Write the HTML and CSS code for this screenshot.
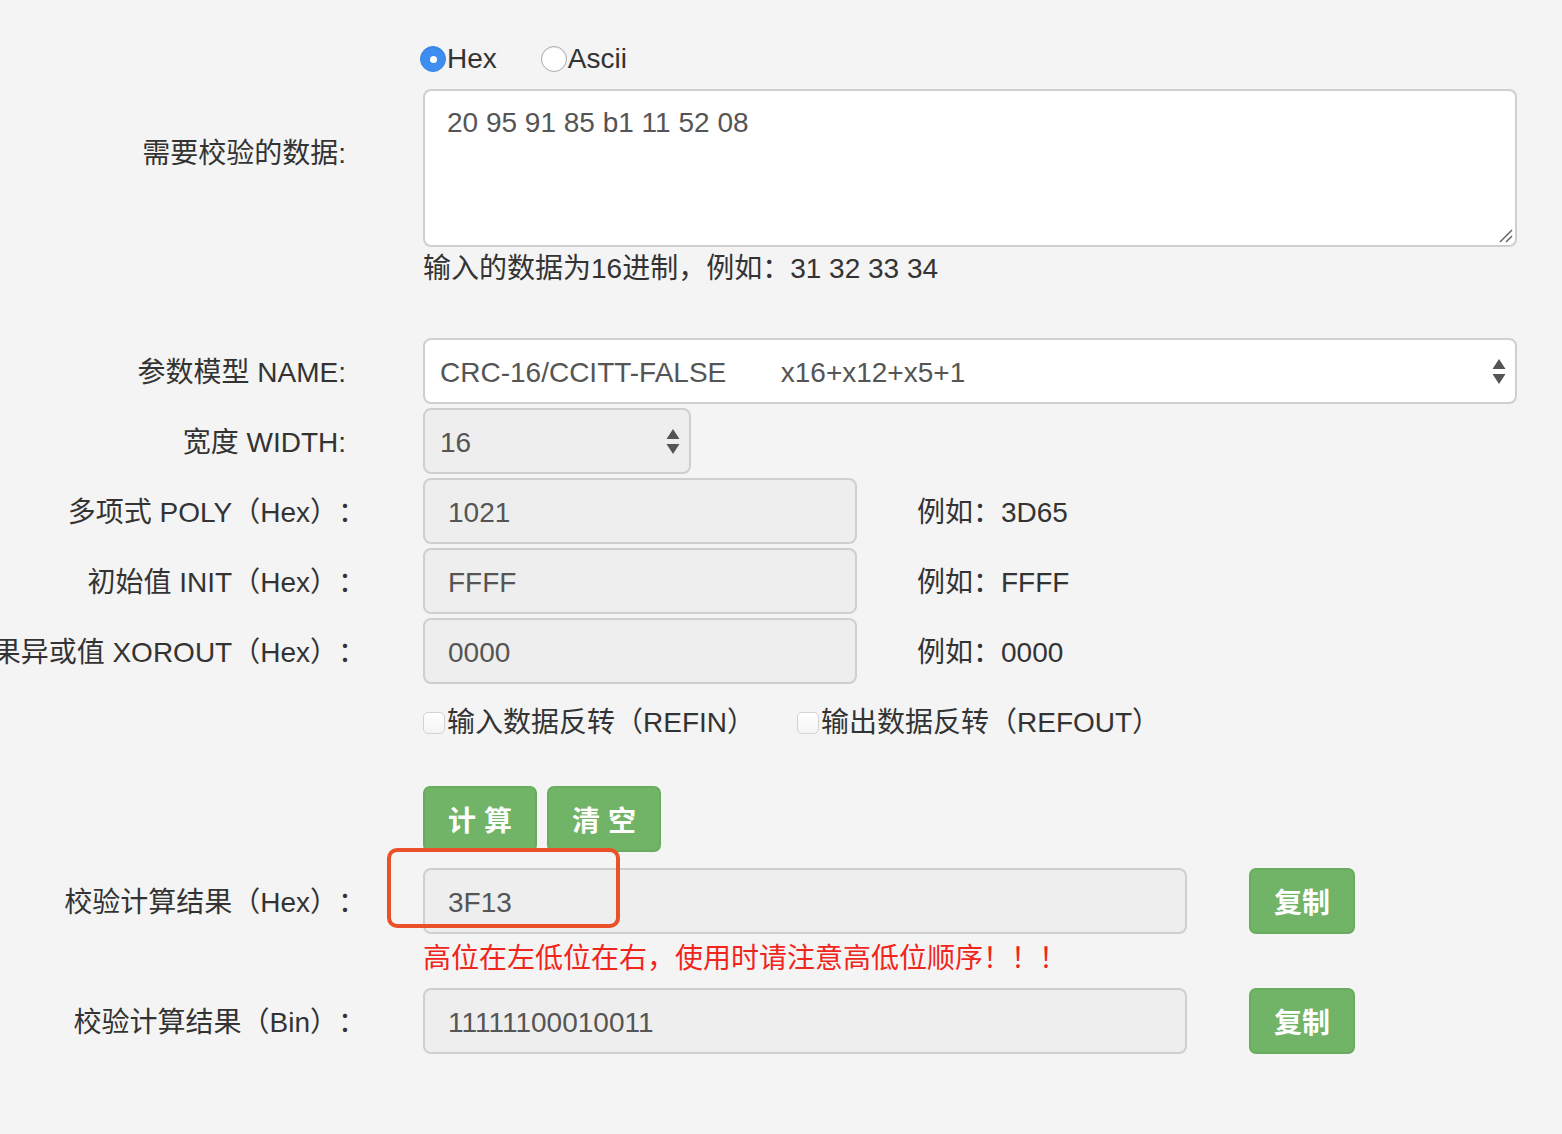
FILE: index.html
```html
<!DOCTYPE html>
<html lang="zh-CN">
<head>
<meta charset="utf-8">
<title>CRC 计算</title>
<link rel="stylesheet" href="styles.css">
</head>
<body>
<form class="form">
  <div class="row row-radio">
    <div class="label"></div>
    <div class="field radios">
      <label class="radio"><span class="radio-dot checked"></span>Hex</label>
      <label class="radio"><span class="radio-dot"></span>Ascii</label>
    </div>
  </div>

  <div class="row row-data">
    <div class="label label-top label-half"><span>需要校验的数据:</span></div>
    <div class="field">
      <div class="textarea">20 95 91 85 b1 11 52 08
        <svg class="grip" width="14" height="14" viewBox="0 0 14 14"><path d="M1 13 L13 1 M7 13 L13 7" stroke="#666" stroke-width="1.5"/></svg>
      </div>
      <div class="help">输入的数据为16进制，例如：31 32 33 34</div>
    </div>
  </div>

  <div class="row row-name">
    <div class="label label-half"><span>参数模型 NAME:</span></div>
    <div class="field">
      <div class="select select-wide">CRC-16/CCITT-FALSE&nbsp;&nbsp;&nbsp;&nbsp;&nbsp;&nbsp;&nbsp;x16+x12+x5+1
        <svg class="arrows" width="14" height="26" viewBox="0 0 14 26"><path d="M7 0 L13.5 10 L0.5 10 Z M0.5 15 L13.5 15 L7 25 Z" fill="#555"/></svg>
      </div>
    </div>
  </div>

  <div class="row row-tight">
    <div class="label label-half"><span>宽度 WIDTH:</span></div>
    <div class="field">
      <div class="select select-small">16
        <svg class="arrows" width="14" height="26" viewBox="0 0 14 26"><path d="M7 0 L13.5 10 L0.5 10 Z M0.5 15 L13.5 15 L7 25 Z" fill="#555"/></svg>
      </div>
    </div>
  </div>

  <div class="row row-tight">
    <div class="label"><span>多项式 POLY（Hex）：</span></div>
    <div class="field inline">
      <div class="input input-mid">1021</div>
      <div class="example">例如：3D65</div>
    </div>
  </div>

  <div class="row row-tight">
    <div class="label"><span>初始值 INIT（Hex）：</span></div>
    <div class="field inline">
      <div class="input input-mid">FFFF</div>
      <div class="example">例如：FFFF</div>
    </div>
  </div>

  <div class="row row-tight">
    <div class="label"><span>结果异或值 XOROUT（Hex）：</span></div>
    <div class="field inline">
      <div class="input input-mid">0000</div>
      <div class="example">例如：0000</div>
    </div>
  </div>

  <div class="row row-check">
    <div class="label"></div>
    <div class="field checks">
      <label class="check check-1"><span class="box"></span>输入数据反转（REFIN）</label>
      <label class="check"><span class="box"></span>输出数据反转（REFOUT）</label>
    </div>
  </div>

  <div class="row row-buttons">
    <div class="label"></div>
    <div class="field buttons">
      <span class="btn btn-action">计 算</span>
      <span class="btn btn-action">清 空</span>
    </div>
  </div>

  <div class="row row-result">
    <div class="label"><span>校验计算结果（Hex）：</span></div>
    <div class="field inline result">
      <div class="input input-long">3F13</div>
      <span class="btn btn-copy">复制</span>
      <div class="annotation"></div>
    </div>
  </div>

  <div class="row row-warn">
    <div class="label"></div>
    <div class="field warn">高位在左低位在右，使用时请注意高低位顺序！！！</div>
  </div>

  <div class="row row-bin">
    <div class="label"><span>校验计算结果（Bin）：</span></div>
    <div class="field inline">
      <div class="input input-long">11111100010011</div>
      <span class="btn btn-copy">复制</span>
    </div>
  </div>
</form>
</body>
</html>
```

FILE: styles.css
```css
html, body {
  margin: 0;
  padding: 0;
  background: #f4f4f4;
}

body {
  font-family: "Liberation Sans", "Noto Sans CJK SC", sans-serif;
  font-size: 28px;
  line-height: 40px;
  color: #333;
  text-spacing-trim: space-all;
}

.form {
  padding-top: 39px;
}

.row {
  display: grid;
  grid-template-columns: 366px 1094px;
  column-gap: 57px;
  align-items: center;
}

.label {
  display: flex;
  justify-content: flex-end;
  white-space: nowrap;
  min-width: 0;
  padding-top: 4px;
}

.label-half {
  padding-right: 20px;
}

.label-top {
  align-self: start;
  padding-top: 45px;
}

.field {
  min-width: 0;
}

/* radios */
.radios {
  display: flex;
  align-items: center;
  height: 40px;
  margin-left: -3px;
}

.radio {
  display: flex;
  align-items: center;
  margin-right: 44px;
  color: #333;
}

.radio-dot {
  box-sizing: border-box;
  width: 26px;
  height: 26px;
  border-radius: 50%;
  background: #fff;
  border: 1px solid #aaa;
  box-shadow: inset 0 1px 1px rgba(0,0,0,0.08);
  margin-right: 1px;
  position: relative;
}

.radio-dot.checked {
  background: #3d8ef0;
  border-color: #3a86e6;
}

.radio-dot.checked::after {
  content: "";
  position: absolute;
  left: 9px;
  top: 9px;
  width: 7px;
  height: 7px;
  border-radius: 50%;
  background: #fff;
}

/* textarea */
.row-data {
  margin-top: 10px;
}

.textarea {
  box-sizing: border-box;
  height: 158px;
  background: #fff;
  border: 2px solid #cfcfcf;
  border-radius: 8px;
  padding: 12px 22px;
  color: #555;
  position: relative;
}

.grip {
  position: absolute;
  right: 2px;
  bottom: 2px;
}

.help {
  color: #333;
  padding-top: 2px;
}

/* selects */
.row-name {
  margin-top: 49px;
}

.row-tight {
  margin-top: 4px;
}

.select {
  box-sizing: border-box;
  height: 66px;
  border: 2px solid #cfcfcf;
  border-radius: 8px;
  padding: 4px 15px 0;
  display: flex;
  align-items: center;
  color: #555;
  position: relative;
  white-space: nowrap;
}

.select-wide {
  background: #fff;
}

.select-small {
  width: 268px;
  background: #eee;
}

.arrows {
  position: absolute;
  right: 9px;
  top: 19px;
}

/* inputs */
.inline {
  display: flex;
  align-items: center;
}

.input {
  box-sizing: border-box;
  height: 66px;
  border: 2px solid #cfcfcf;
  border-radius: 8px;
  background: #eee;
  padding: 4px 23px 0;
  display: flex;
  align-items: center;
  color: #555;
  flex: none;
}

.input-mid {
  width: 434px;
}

.input-long {
  width: 764px;
}

.example {
  margin-left: 60px;
  color: #333;
  padding-top: 4px;
}

/* checkboxes */
.row-check {
  margin-top: 19px;
}

.checks {
  display: flex;
  align-items: center;
}

.check {
  display: flex;
  align-items: center;
  white-space: nowrap;
}

.check-1 {
  width: 374px;
  flex: none;
}

.box {
  box-sizing: border-box;
  width: 22px;
  height: 22px;
  border: 1px solid #d3d3d3;
  border-radius: 5px;
  background: linear-gradient(#fff, #f3f3f3);
  margin-right: 2px;
  flex: none;
}

/* buttons */
.row-buttons {
  margin-top: 43px;
}

.buttons {
  display: flex;
  gap: 10px;
}

.btn {
  box-sizing: border-box;
  display: inline-flex;
  align-items: center;
  justify-content: center;
  height: 66px;
  padding-top: 5px;
  background: #72b467;
  border: 2px solid #68ac5d;
  border-radius: 7px;
  color: #fff;
  font-weight: bold;
}

.btn-action {
  width: 114px;
}

.btn-copy {
  width: 106px;
  margin-left: 62px;
}

/* result */
.row-result {
  margin-top: 16px;
}

.result {
  position: relative;
}

.annotation {
  position: absolute;
  left: -36px;
  top: -20px;
  width: 233px;
  height: 80px;
  box-sizing: border-box;
  border: 4px solid #ea5128;
  border-radius: 10px;
}

.row-warn {
  margin-top: 5px;
}

.warn {
  color: #f0261c;
}

.row-bin {
  margin-top: 9px;
}
```
